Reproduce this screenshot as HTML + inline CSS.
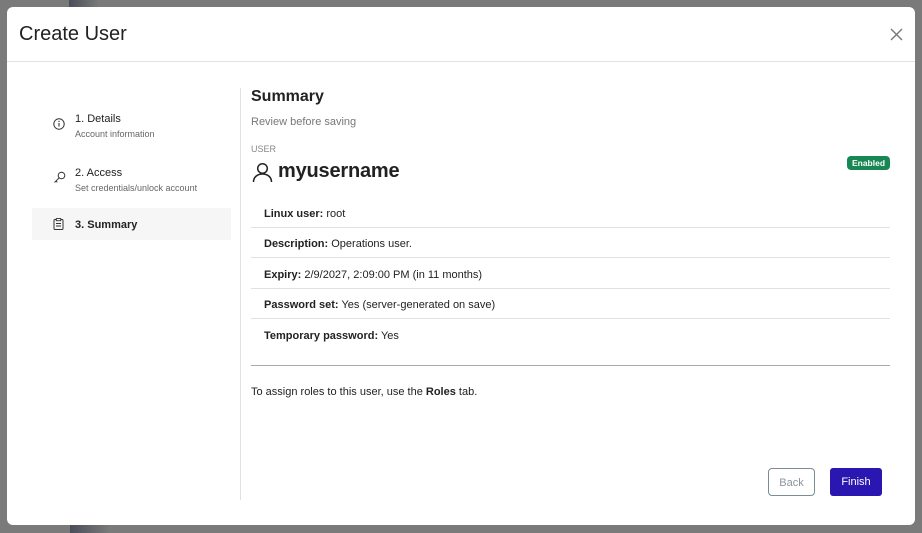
<!DOCTYPE html>
<html><head><meta charset="utf-8">
<style>
*{box-sizing:border-box;margin:0;padding:0}
body{width:922px;height:532px;background:#7a7a7a;position:relative;overflow:hidden;font-family:"Liberation Sans",sans-serif;color:#212529}
.strip{position:absolute;left:69px;width:30px;height:8px;background:linear-gradient(90deg,#4a4e5a,#7a7a7a)}
.modal{position:absolute;left:7px;top:7px;width:908px;height:518px;background:#fff;border-radius:6px}
.hdr{height:55px;border-bottom:1px solid #dee2e6;position:relative}
.hdr h1{position:absolute;left:12px;top:16px;font-size:20px;font-weight:400;color:#222}
.close{position:absolute;right:12px;top:21px}
.abs{position:absolute}
.step-t{font-size:11px;color:#222}
.step-s{font-size:9px;color:#666}
.row{position:absolute;left:244px;width:639px;height:31px;border-bottom:1px solid #dee2e6;font-size:11px;padding:11px 0 0 13px;color:#222}
.row b{font-weight:700}
</style></head><body>
<div class="strip" style="top:0"></div>
<div class="strip" style="top:525px;left:70px;width:40px"></div>
<div class="modal">
 <div class="hdr"><h1>Create User</h1>
  <svg class="close" width="13" height="13" viewBox="0 0 13 13"><path d="M1 1L12 12M12 1L1 12" stroke="#777" stroke-width="1.4"/></svg>
 </div>
 <svg class="abs" style="left:46px;top:111px" width="12" height="12" viewBox="0 0 12 12"><circle cx="6" cy="6" r="5.2" fill="none" stroke="#333" stroke-width="1"/><path d="M6 5v3.5" stroke="#333" stroke-width="1.1"/><circle cx="6" cy="3.4" r=".7" fill="#333"/></svg>
 <div class="abs step-t" style="left:68px;top:106px">1. Details</div>
 <div class="abs step-s" style="left:68px;top:122px">Account information</div>
 <svg class="abs" style="left:46px;top:164px" width="13" height="13" viewBox="0 0 13 13"><circle cx="8.5" cy="4.5" r="3.3" fill="none" stroke="#333" stroke-width="1"/><path d="M6.2 6.8L1.5 11.5M3 10l1.3 1.3" stroke="#333" stroke-width="1" fill="none"/></svg>
 <div class="abs step-t" style="left:68px;top:160px">2. Access</div>
 <div class="abs step-s" style="left:68px;top:176px">Set credentials/unlock account</div>
 <div class="abs" style="left:25px;top:201px;width:199px;height:32px;background:#f6f6f6"></div>
 <svg class="abs" style="left:46px;top:211px" width="11" height="12" viewBox="0 0 11 12"><rect x="1" y="1.5" width="9" height="10" rx="1" fill="none" stroke="#333" stroke-width="1"/><rect x="3.3" y=".5" width="4.4" height="2.2" fill="#fff" stroke="#333" stroke-width=".9"/><path d="M3 5.5h5M3 8h5" stroke="#333" stroke-width="1"/></svg>
 <div class="abs step-t" style="left:68px;top:212px;font-weight:700">3. Summary</div>
 <div class="abs" style="left:233px;top:81px;width:1px;height:412px;background:#dee2e6"></div>
 <div class="abs" style="left:244px;top:81px;font-size:16px;font-weight:700;color:#222">Summary</div>
 <div class="abs" style="left:244px;top:109px;font-size:11px;color:#777">Review before saving</div>
 <div class="abs" style="left:244px;top:137px;font-size:9px;color:#888">USER</div>
 <svg class="abs" style="left:245px;top:155px" width="21" height="21" viewBox="0 0 21 21"><circle cx="10.5" cy="6.5" r="4.8" fill="none" stroke="#222" stroke-width="1.5"/><path d="M1.5 20c0-5 4-8 9-8s9 3 9 8" fill="none" stroke="#222" stroke-width="1.5"/></svg>
 <div class="abs" style="left:271px;top:153px;font-size:20px;font-weight:600;color:#222;letter-spacing:-0.2px">myusername</div>
 <div class="abs" style="left:840px;top:149px;width:43px;height:14px;background:#198754;border-radius:4px;color:#fff;font-size:8.5px;font-weight:700;text-align:center;line-height:14px">Enabled</div>
 <div class="row" style="top:190px"><b>Linux user:</b> root</div>
 <div class="row" style="top:220px"><b>Description:</b> Operations user.</div>
 <div class="row" style="top:251px"><b>Expiry:</b> 2/9/2027, 2:09:00 PM (in 11 months)</div>
 <div class="row" style="top:281px"><b>Password set:</b> Yes (server-generated on save)</div>
 <div class="row" style="top:312px;border:none"><b>Temporary password:</b> Yes</div>
 <div class="abs" style="left:244px;top:358px;width:639px;height:1px;background:#aaa"></div>
 <div class="abs" style="left:244px;top:379px;font-size:11px;color:#222">To assign roles to this user, use the <b>Roles</b> tab.</div>
 <div class="abs" style="left:761px;top:461px;width:47px;height:28px;border:1px solid #7a8c96;border-radius:4px;color:#8a959c;font-size:11px;text-align:center;line-height:28px">Back</div>
 <div class="abs" style="left:823px;top:461px;width:52px;height:28px;background:#2a16b0;border-radius:3px;color:#fff;font-size:11px;text-align:center;line-height:29px">Finish</div>
</div>
</body></html>
